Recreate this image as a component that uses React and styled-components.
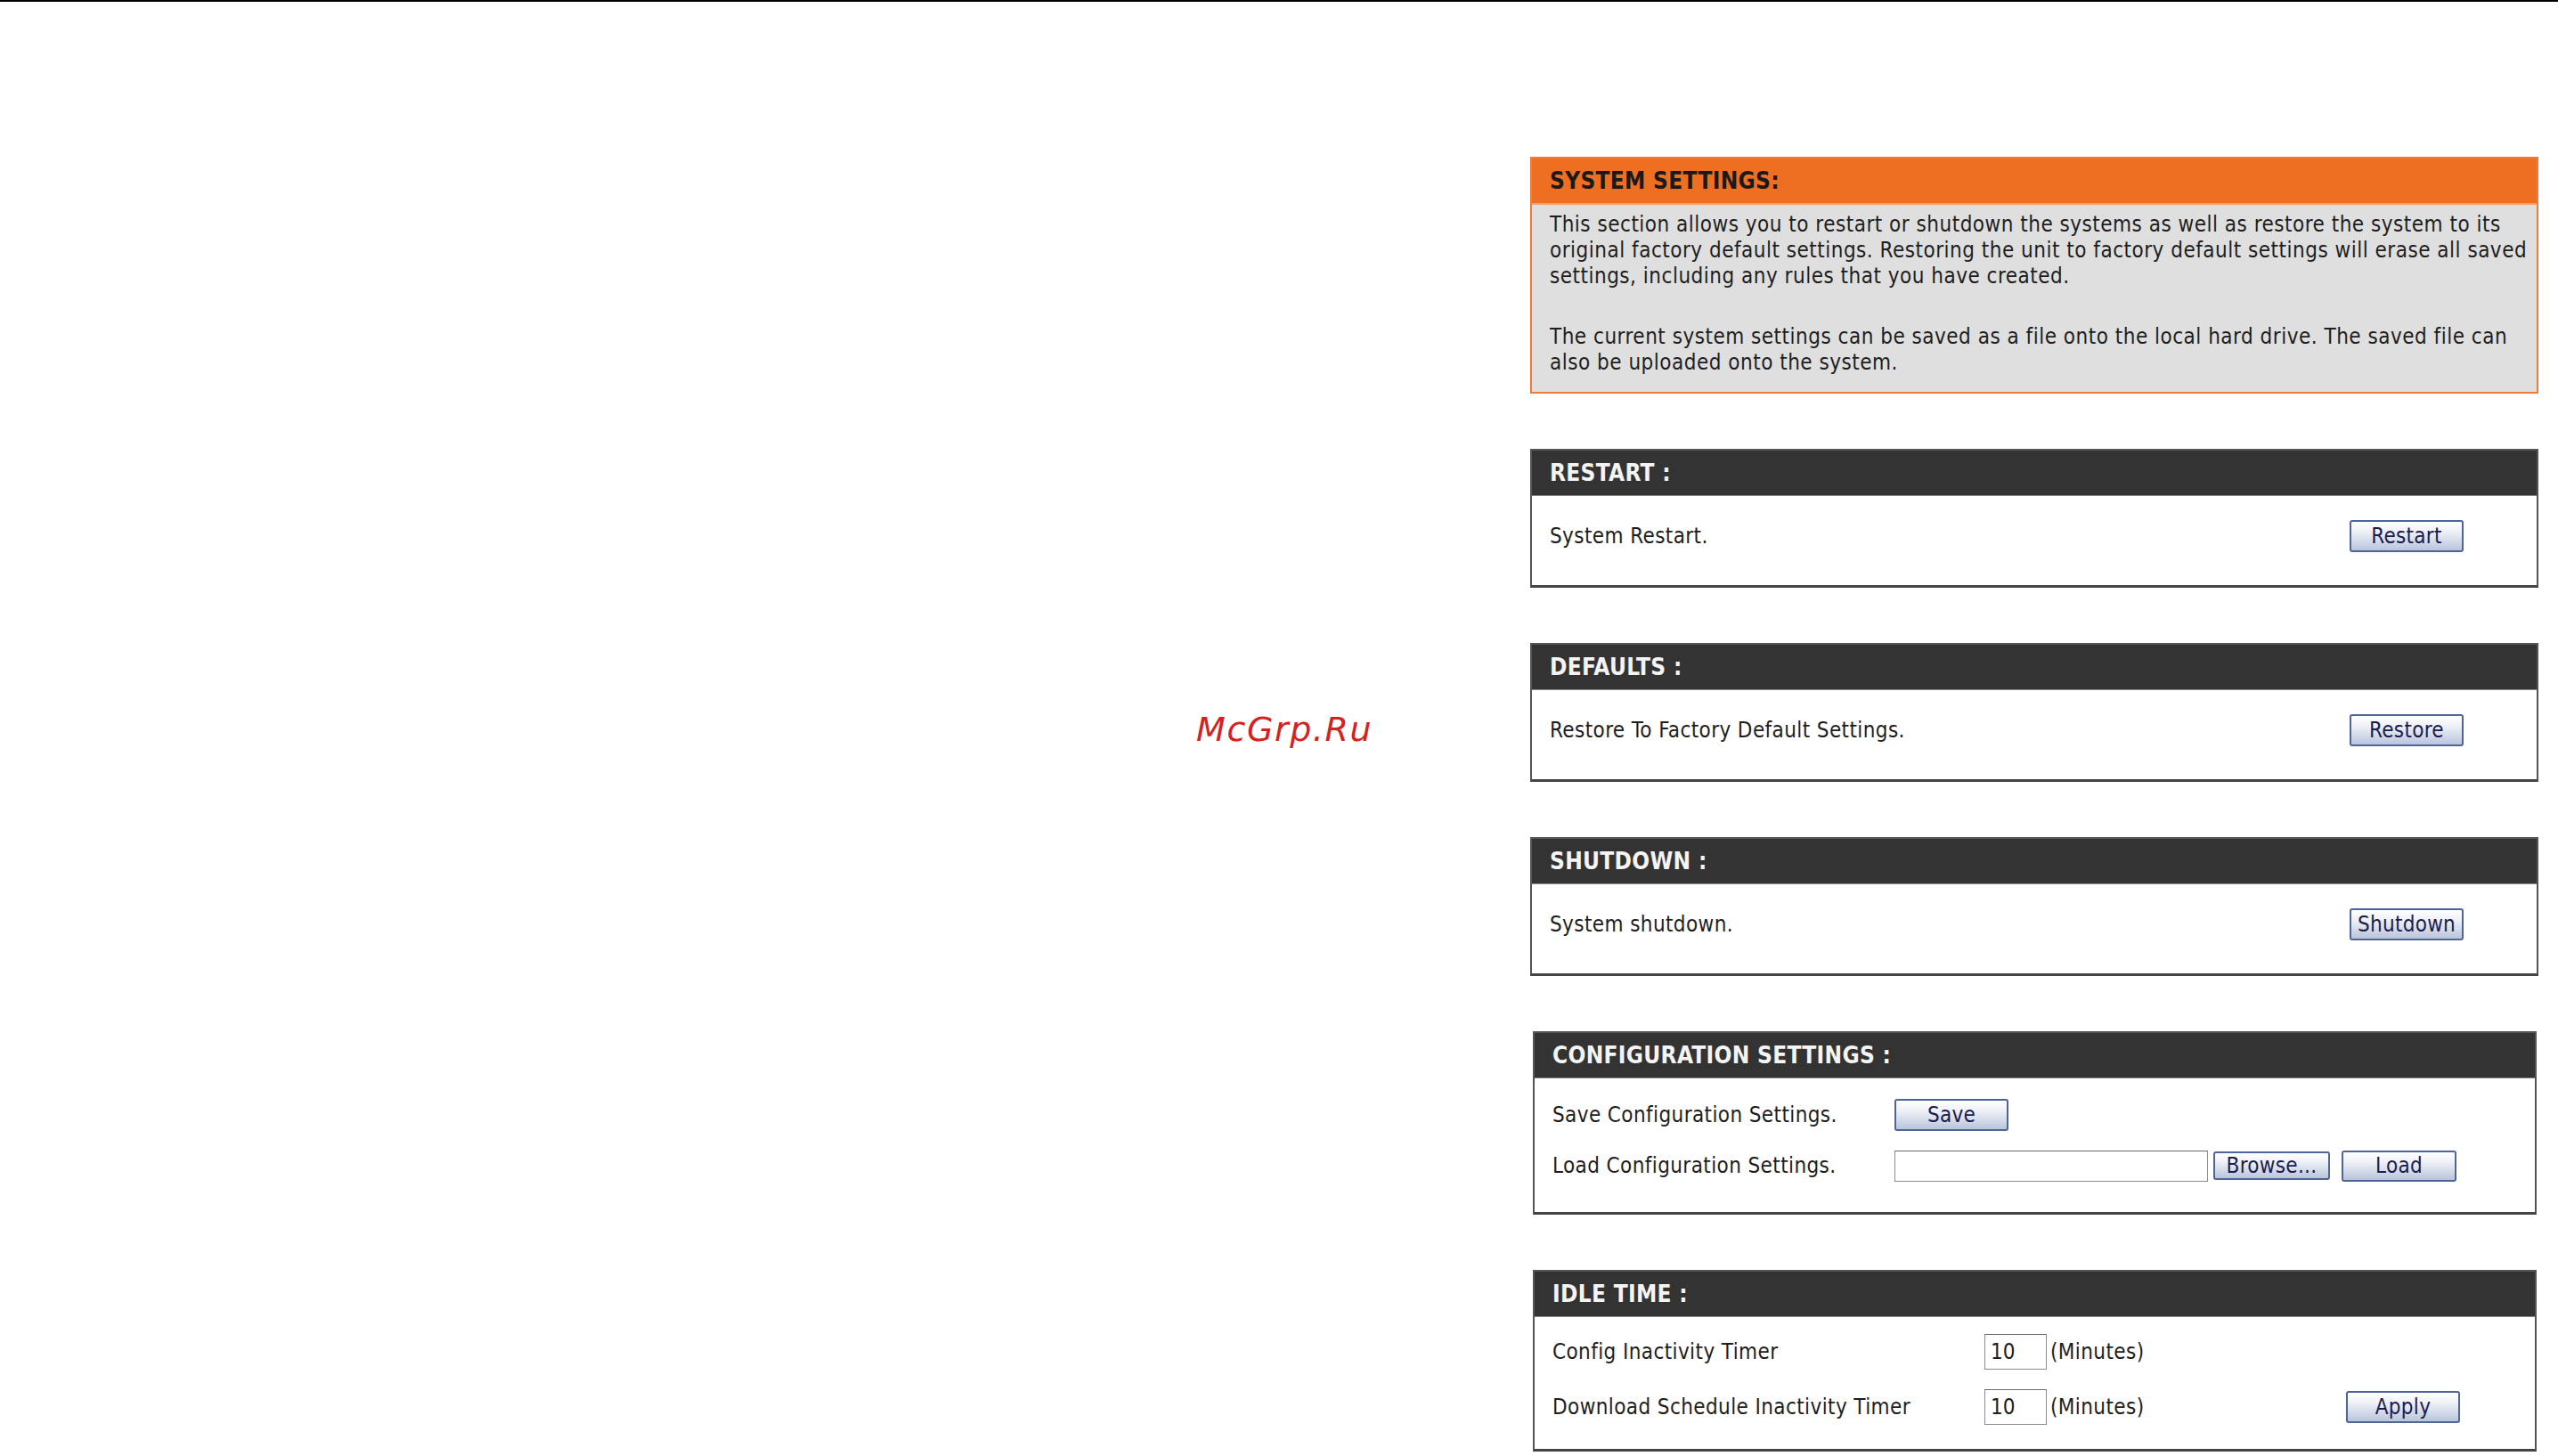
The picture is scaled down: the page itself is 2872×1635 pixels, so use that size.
import styled, { createGlobalStyle } from 'styled-components';

const GlobalStyle = createGlobalStyle`
  body {
    margin: 0;
    background: #ffffff;
    font-family: 'DejaVu Sans Condensed', 'DejaVu Sans', sans-serif;
    color: #1e1e1e;
  }
`;

const TopRule = styled.div`
  height: 2px;
  background: #000;
`;

const Page = styled.div`
  position: relative;
  padding: 174px 0 0 1718px;
`;

const Stamp = styled.div`
  position: absolute;
  left: 1343px;
  top: 795px;
  font-family: 'DejaVu Sans', sans-serif;
  font-style: italic;
  font-size: 38px;
  letter-spacing: 1.6px;
  color: #d42222;
`;

const Column = styled.div`
  width: 1132px;
  display: flex;
  flex-direction: column;
  gap: 62px;
`;

const InfoBox = styled.section`
  border: 2px solid #f07a38;
  background: #dfdfdf;
`;

const InfoTitle = styled.h2`
  margin: 0;
  height: 50px;
  display: flex;
  align-items: center;
  padding-left: 20px;
  background: #ef6f22;
  border-bottom: 2px solid #f3a070;
  font-size: 26px;
  letter-spacing: 0.3px;
  font-weight: bold;
  color: #1a1a1a;
`;

const InfoText = styled.div`
  padding: 8px 20px 18px;
  font-size: 24px;
  letter-spacing: 0.5px;
  line-height: 29px;
  white-space: nowrap;

  p {
    margin: 0;
  }
  p + p {
    margin-top: 39px;
  }
`;

const Panel = styled.section`
  border: 2px solid #555;
  border-bottom: 3px solid #444;
  background: #fff;
  margin: ${({ $inset }) => ($inset ? '0 2px 0 3px' : '0')};
`;

const PanelTitle = styled.h2`
  margin: 0;
  height: 50px;
  display: flex;
  align-items: center;
  padding-left: 20px;
  background: #333333;
  border-bottom: 1px solid #888;
  font-size: 26px;
  letter-spacing: 0.3px;
  font-weight: bold;
  color: #f4f4f4;
`;

const Body = styled.div`
  padding: ${({ $pad }) => $pad};
  display: flex;
  flex-direction: column;
  gap: ${({ $gap }) => $gap || 0}px;
  font-size: 24px;
  letter-spacing: 0.4px;
`;

const Row = styled.div`
  display: flex;
  align-items: center;
  justify-content: space-between;
  height: 36px;
`;

const FormRow = styled.div`
  display: grid;
  grid-template-columns: ${({ $cols }) => $cols};
  align-items: center;
  height: ${({ $h }) => $h}px;
`;

const Controls = styled.div`
  display: flex;
  align-items: center;
  gap: ${({ $gap }) => $gap}px;
`;

const Button = styled.button`
  width: ${({ $w }) => $w}px;
  height: ${({ $h }) => $h || 36}px;
  padding: 0;
  border: 2px solid #4d6597;
  border-radius: 3px;
  background: linear-gradient(#ffffff 0%, #eef1f7 35%, #b9c4dc 100%);
  font-family: 'DejaVu Sans Condensed', 'DejaVu Sans', sans-serif;
  font-size: 24px;
  letter-spacing: 0.3px;
  color: #1c1c4e;
`;

const TextInput = styled.input`
  box-sizing: border-box;
  width: ${({ $w }) => $w}px;
  height: ${({ $h }) => $h}px;
  padding: 0 6px;
  border: 1px solid #8c8c8c;
  border-top-color: #6a6a6a;
  background: #fff;
  font-family: 'DejaVu Sans Condensed', 'DejaVu Sans', sans-serif;
  font-size: 24px;
  color: #1e1e1e;
`;

const Unit = styled.span`
  margin-left: 4px;
`;

const SimplePanel = ({ title, label, action }) => (
  <Panel>
    <PanelTitle>{title}</PanelTitle>
    <Body $pad="27px 82px 37px 20px">
      <Row>
        <span>{label}</span>
        <Button $w={128}>{action}</Button>
      </Row>
    </Body>
  </Panel>
);

const App = () => (
  <>
    <GlobalStyle />
    <TopRule />
    <Page>
      <Stamp>McGrp.Ru</Stamp>
      <Column>
        <InfoBox>
          <InfoTitle>SYSTEM SETTINGS:</InfoTitle>
          <InfoText>
            <p>
              This section allows you to restart or shutdown the systems as well as restore the system to its
              <br />
              original factory default settings. Restoring the unit to factory default settings will erase all saved
              <br />
              settings, including any rules that you have created.
            </p>
            <p>
              The current system settings can be saved as a file onto the local hard drive. The saved file can
              <br />
              also be uploaded onto the system.
            </p>
          </InfoText>
        </InfoBox>

        <SimplePanel title="RESTART :" label="System Restart." action="Restart" />
        <SimplePanel title="DEFAULTS :" label="Restore To Factory Default Settings." action="Restore" />
        <SimplePanel title="SHUTDOWN :" label="System shutdown." action="Shutdown" />

        <Panel $inset>
          <PanelTitle>CONFIGURATION SETTINGS :</PanelTitle>
          <Body $pad="23px 20px 34px 20px" $gap={21}>
            <FormRow $cols="384px auto" $h={36}>
              <span>Save Configuration Settings.</span>
              <Controls $gap={0}>
                <Button $w={128}>Save</Button>
              </Controls>
            </FormRow>
            <FormRow $cols="384px auto" $h={36}>
              <span>Load Configuration Settings.</span>
              <Controls $gap={6}>
                <TextInput $w={352} $h={35} />
                <Button $w={131} $h={32}>Browse...</Button>
                <Button $w={129} $h={35} style={{ marginLeft: 7 }}>Load</Button>
              </Controls>
            </FormRow>
          </Body>
        </Panel>

        <Panel $inset>
          <PanelTitle>IDLE TIME :</PanelTitle>
          <Body $pad="19px 84px 27px 20px" $gap={22}>
            <FormRow $cols="485px 1fr auto" $h={40}>
              <span>Config Inactivity Timer</span>
              <Controls $gap={0}>
                <TextInput $w={70} $h={40} defaultValue="10" />
                <Unit>(Minutes)</Unit>
              </Controls>
            </FormRow>
            <FormRow $cols="485px 1fr auto" $h={40}>
              <span>Download Schedule Inactivity Timer</span>
              <Controls $gap={0}>
                <TextInput $w={70} $h={40} defaultValue="10" />
                <Unit>(Minutes)</Unit>
              </Controls>
              <Button $w={128}>Apply</Button>
            </FormRow>
          </Body>
        </Panel>
      </Column>
    </Page>
  </>
);

export default App;
